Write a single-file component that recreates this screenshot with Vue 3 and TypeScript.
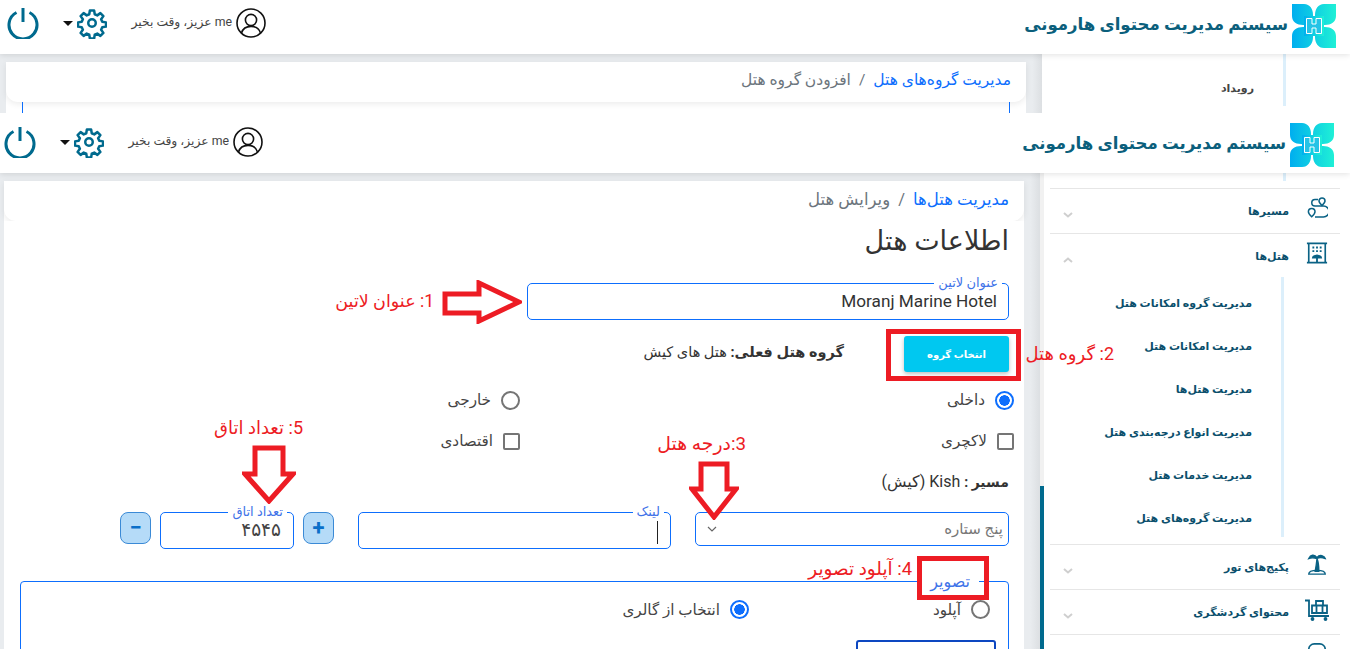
<template>
  <div class="page">
    <!-- upper shot, cut off by the lower one -->
    <section class="shot shot-a">
      <header class="top">
        <svg class="logo" viewBox="0 0 44 44">
          <defs>
            <linearGradient id="lg" x1="0" y1="0" x2="1" y2="0">
              <stop offset="0" stop-color="#00aeef" />
              <stop offset="1" stop-color="#1ff0d6" />
            </linearGradient>
          </defs>
          <path fill="url(#lg)" d="M0 0H12C18 0 21 5 21 11V14H14V21H11C5 21 0 18 0 12ZM44 0H32C26 0 23 5 23 11V14H30V21H33C39 21 44 18 44 12ZM0 44H12C18 44 21 39 21 33V30H14V23H11C5 23 0 26 0 32ZM44 44H32C26 44 23 39 23 33V30H30V23H33C39 23 44 26 44 32Z" />
          <rect x="12" y="12" width="20" height="20" fill="url(#lg)" />
          <path fill="#25c3e6" stroke="#fff" d="M14.500 14.500H20V20H24V14.500H29.500V29.500H24V24H20V29.500H14.500Z" />
        </svg>
        <h1 class="brand">سیستم مدیریت محتوای هارمونی</h1>
        <div class="tools">
          <svg class="avatar" viewBox="0 0 30 30" fill="none" stroke="#111" stroke-width="1.6">
            <circle cx="15" cy="15" r="14" />
            <circle cx="15" cy="12" r="5.6" />
            <path d="M5.5 25C7 20 11 18.4 15 18.4S23 20 24.5 25" />
          </svg>
          <span class="hello">me عزیز، وقت بخیر</span>
          <svg class="gear" viewBox="0 0 24 24" fill="none" stroke="#006a8e" stroke-width="2" stroke-linejoin="round">
            <circle cx="12" cy="12" r="3" />
            <path d="M10.3 2h3.4l.5 3 2 .9 2.500-1.800 2.400 2.400-1.800 2.500.9 2 3 .5v3.400l-3 .5-.9 2 1.800 2.500-2.400 2.400-2.500-1.800-2 .9-.5 3h-3.400l-.5-3-2-.9-2.500 1.800-2.400-2.400 1.800-2.500-.9-2-3-.5v-3.400l3-.5.9-2-1.800-2.500 2.400-2.400 2.500 1.800 2-.9z" />
          </svg>
          <span class="caret"></span>
          <svg class="power" viewBox="0 0 32 32" fill="none" stroke="#006a8e" stroke-width="3">
            <path d="M9.500 5.500A14 14 0 1 0 22.500 5.500" />
            <path d="M16 1V15" />
          </svg>
        </div>
      </header>
      <div class="body">
        <aside class="side side-a">
          <div class="track"></div>
          <div class="side-a-in">
            <div class="sub-a"><span>رویداد</span></div>
          </div>
        </aside>
        <div class="gutter"></div>
        <main class="main">
          <nav class="crumb">
            <a>مدیریت گروه‌های هتل</a><i>/</i><span>افزودن گروه هتل</span>
          </nav>
          <div class="cut-box"></div>
        </main>
      </div>
    </section>

    <!-- lower shot -->
    <section class="shot shot-b">
      <header class="top">
        <svg class="logo" viewBox="0 0 44 44">
          <path fill="url(#lg)" d="M0 0H12C18 0 21 5 21 11V14H14V21H11C5 21 0 18 0 12ZM44 0H32C26 0 23 5 23 11V14H30V21H33C39 21 44 18 44 12ZM0 44H12C18 44 21 39 21 33V30H14V23H11C5 23 0 26 0 32ZM44 44H32C26 44 23 39 23 33V30H30V23H33C39 23 44 26 44 32Z" />
          <rect x="12" y="12" width="20" height="20" fill="url(#lg)" />
          <path fill="#25c3e6" stroke="#fff" d="M14.500 14.500H20V20H24V14.500H29.500V29.500H24V24H20V29.500H14.500Z" />
        </svg>
        <h1 class="brand">سیستم مدیریت محتوای هارمونی</h1>
        <div class="tools">
          <svg class="avatar" viewBox="0 0 30 30" fill="none" stroke="#111" stroke-width="1.6">
            <circle cx="15" cy="15" r="14" />
            <circle cx="15" cy="12" r="5.6" />
            <path d="M5.5 25C7 20 11 18.4 15 18.4S23 20 24.5 25" />
          </svg>
          <span class="hello">me عزیز، وقت بخیر</span>
          <svg class="gear" viewBox="0 0 24 24" fill="none" stroke="#006a8e" stroke-width="2" stroke-linejoin="round">
            <circle cx="12" cy="12" r="3" />
            <path d="M10.3 2h3.4l.5 3 2 .9 2.500-1.800 2.400 2.400-1.800 2.500.9 2 3 .5v3.400l-3 .5-.9 2 1.800 2.500-2.400 2.400-2.500-1.800-2 .9-.5 3h-3.400l-.5-3-2-.9-2.500 1.800-2.400-2.400 1.800-2.500-.9-2-3-.5v-3.400l3-.5.9-2-1.800-2.500 2.400-2.400 2.500 1.800 2-.9z" />
          </svg>
          <span class="caret"></span>
          <svg class="power" viewBox="0 0 32 32" fill="none" stroke="#006a8e" stroke-width="3">
            <path d="M9.500 5.500A14 14 0 1 0 22.500 5.500" />
            <path d="M16 1V15" />
          </svg>
        </div>
      </header>

      <div class="body">
        <aside class="side">
          <div class="track"><div class="thumb"></div></div>
          <div class="menu">
            <div class="stub"></div>
            <div class="item">
              <svg class="ico" viewBox="0 0 22 22" fill="none" stroke="#0a6285" stroke-width="1.500">
                <path d="M16 1a3 3 0 0 1 3 3c0 1.500-3 4.500-3 4.500s-3-3-3-4.500a3 3 0 0 1 3-3z" />
                <path d="M12 2.500H9a3.250 3.250 0 0 0 0 6.500H17.500a5.500 5.500 0 0 1 0 11H9" />
                <path d="M5.700 11.500a3.300 3.300 0 0 1 3.300 3.300c0 2-3.300 5-3.300 5s-3.300-3-3.300-5a3.300 3.300 0 0 1 3.300-3.300z" />
              </svg>
              <span>مسیرها</span>
              <svg class="chev" viewBox="0 0 10 6"><path d="M1 1l4 3.500L9 1" /></svg>
            </div>
            <div class="item open">
              <svg class="ico" viewBox="0 0 24 24" fill="none" stroke="#0a6285" stroke-width="1.800">
                <path d="M1 1.500H23M1 22.500H23M3 1.500V22.500M21 1.500V22.500" />
                <path d="M7 6h2M11 6h2M15 6h2M7 10h2M11 10h2M15 10h2M12 14V22" stroke-width="2" />
                <path d="M7.500 17C8 14 16 14 16.500 17Z" fill="#0a6285" />
              </svg>
              <span>هتل‌ها</span>
              <svg class="chev" viewBox="0 0 10 6"><path d="M1 5l4-3.500L9 5" /></svg>
            </div>
            <ul class="subs">
              <li v-for="s in subs" :key="s">{{ s }}</li>
            </ul>
            <div class="item sep">
              <svg class="ico" viewBox="0 0 24 24" fill="#0a6285" stroke="#0a6285" stroke-width="1.500">
                <path d="M12 5C9 1 5 2 3 6c3-1 5-1 9 0 3-1.500 6-1 9 0-1-3-6-5-9-1zM12 6c-.5 5-1 9-2 14h4c0-5 0-9-2-14z" />
                <path d="M3 23c0-3 4-4 9-4s9 1 9 4z" fill="none" />
              </svg>
              <span>پکیج‌های تور</span>
              <svg class="chev" viewBox="0 0 10 6"><path d="M1 1l4 3.500L9 1" /></svg>
            </div>
            <div class="item">
              <svg class="ico wide" viewBox="0 0 26 22" fill="none" stroke="#0a6285" stroke-width="1.800">
                <path d="M1 1.500H5V17H25" />
                <path d="M8 6.500H23V14H8ZM12.500 14V6.500M18.500 14V6.500M12 6.500V2H19V6.500" />
                <circle cx="8.500" cy="20" r="1" fill="#0a6285" />
                <circle cx="21.500" cy="20" r="1" fill="#0a6285" />
              </svg>
              <span>محتوای گردشگری</span>
              <svg class="chev" viewBox="0 0 10 6"><path d="M1 1l4 3.500L9 1" /></svg>
            </div>
            <div class="item">
              <svg class="ico" viewBox="0 0 24 24" fill="none" stroke="#0a6285" stroke-width="1.800">
                <rect x="3" y="1" width="18" height="22" rx="6" />
              </svg>
            </div>
          </div>
        </aside>
        <div class="gutter"></div>

        <main class="main">
          <nav class="crumb">
            <a>مدیریت هتل‌ها</a><i>/</i><span>ویرایش هتل</span>
          </nav>
          <form class="form" @submit.prevent>
            <h2>اطلاعات هتل</h2>
            <div class="field latin">
              <label>عنوان لاتین</label>
              <div class="val en">Moranj Marine Hotel</div>
            </div>
            <div class="group">
              <button class="pick" type="button">انتخاب گروه</button>
              <p><b>گروه هتل فعلی:</b> هتل های کیش</p>
            </div>
            <div class="opts first">
              <div class="opt"><span class="radio on"></span>داخلی</div>
              <div class="opt"><span class="radio"></span>خارجی</div>
            </div>
            <div class="opts">
              <div class="opt"><span class="check"></span>لاکچری</div>
              <div class="opt"><span class="check"></span>اقتصادی</div>
            </div>
            <p class="route"><b>مسیر :</b> Kish (کیش)</p>
            <div class="row">
              <div class="field select">
                <span class="ph">پنج ستاره</span>
                <svg viewBox="0 0 10 6" class="sel-chev"><path d="M1 1l4 4 4-4" /></svg>
              </div>
              <div class="field link">
                <label>لینک</label>
                <span class="cursor"></span>
              </div>
              <button class="step" type="button">+</button>
              <div class="field count">
                <label>تعداد اتاق</label>
                <div class="val">۴۵۴۵</div>
              </div>
              <button class="step" type="button">−</button>
            </div>
            <div class="image-box">
              <label>تصویر</label>
              <div class="img-opts">
                <div class="opt"><span class="radio"></span>آپلود</div>
                <div class="opt"><span class="radio on"></span>انتخاب از گالری</div>
              </div>
              <div class="gallery"></div>
            </div>
          </form>
        </main>
      </div>
    </section>

    <!-- hand-drawn notes on top of the shots -->
    <div class="note-box box-2"></div>
    <div class="note-box box-4"></div>
    <svg class="arrow ar-1" viewBox="0 0 80 44"><path d="M3 14H37V3L77 22L37 41V33H3Z" /></svg>
    <svg class="arrow ar-5" viewBox="0 0 54 59"><path d="M13 3H41V29H51L27 56L3 29H13Z" /></svg>
    <svg class="arrow ar-3" viewBox="0 0 50 59"><path d="M12 3H38V28H47L25 56L3 28H12Z" /></svg>
    <span class="note n1">1: عنوان لاتین</span>
    <span class="note n2">2: گروه هتل</span>
    <span class="note n3">3:درجه هتل</span>
    <span class="note n4">4: آپلود تصویر</span>
    <span class="note n5">5: تعداد اتاق</span>
  </div>
</template>

<script setup lang="ts">
const subs: string[] = [
  'مدیریت گروه امکانات هتل',
  'مدیریت امکانات هتل',
  'مدیریت هتل‌ها',
  'مدیریت انواع درجه‌بندی هتل',
  'مدیریت خدمات هتل',
  'مدیریت گروه‌های هتل'
]
</script>

<style>
html, body { margin: 0; overflow: hidden; background: #fff; }
</style>

<style scoped>
.page {
  position: relative;
  width: 1350px;
  height: 649px;
  overflow: hidden;
  font-family: Roboto, "DejaVu Sans", sans-serif;
  color: #333;
  direction: rtl;
}
.shot { overflow: hidden; background: #e9ecef; }
.shot-a { height: 113px; }
.shot-b { height: 536px; }

.top {
  position: relative;
  z-index: 2;
  display: flex;
  align-items: flex-end;
  height: 54px;
  padding: 0 14px 6px 7px;
  box-sizing: border-box;
  background: #fff;
  box-shadow: 0 1px 6px rgba(0, 0, 0, .12);
}
.shot-b .top { height: 60px; padding-right: 16px; padding-left: 4px; }
.logo { width: 44px; height: 44px; flex: none; }
.brand {
  margin: 0 4px 10px 0;
  font-size: 16.600px;
  font-weight: 700;
  line-height: 26px;
  color: #0b5f7c;
  white-space: nowrap;
}
.tools {
  display: flex;
  align-items: center;
  margin-right: auto;
  margin-bottom: 9px;
  height: 32px;
}
.avatar { width: 30px; height: 30px; order: 1; }
.hello {
  order: 2;
  margin: 0 4px 2px 0;
  width: 101px;
  font-size: 12.300px;
  color: #444;
  white-space: nowrap;
}
.gear { order: 3; width: 30px; height: 32px; margin-right: 24px; }
.caret {
  order: 4;
  width: 0;
  height: 0;
  margin-right: 4px;
  border: 5px solid transparent;
  border-top-color: #111;
  border-bottom: 0;
}
.power { order: 5; width: 32px; height: 32px; margin-right: 24px; }

.body { display: flex; align-items: stretch; height: 100%; }

.side { display: flex; flex: none; width: 310px; background: #fff; }
.side-a { width: 308px; }
.track { order: 2; width: 4px; flex: none; background: #f1f1f1; }
.thumb { margin-top: 313px; height: 223px; background: #006a8e; }
.side-a .track { background: #fff; }
.side-a-in { flex: 1; padding-right: 64px; }
.sub-a {
  height: 52px;
  padding: 0 29px 0 0;
  border-right: 3px solid #dceffb;
  font-size: 11px;
  font-weight: 700;
  color: #444;
}
.sub-a span { display: block; padding-top: 28px; }

.menu { flex: 1; padding: 0 10px 0 6px; box-sizing: border-box; min-width: 0; }
.stub {
  height: 16px;
  box-sizing: border-box;
  border-bottom: 1px solid #e6e6e6;
  background: linear-gradient(#dceffb, #dceffb) no-repeat 233px 0 / 3px 8px;
}
.item {
  display: flex;
  align-items: center;
  height: 44px;
  border-bottom: 1px solid #e6e6e6;
  font-size: 11px;
  font-weight: 700;
  color: #0b4f6c;
}
.item.open { border-bottom: 0; }
.item.sep { border-top: 1px solid #e6e6e6; }
.ico { width: 22px; height: 22px; margin: -6px 12px 0 17px; flex: none; }
.ico.wide { width: 26px; margin: -4px 10px 0 15px; }
.item span { white-space: nowrap; }
.chev {
  width: 10px;
  height: 6px;
  margin: 7px auto 0 13px;
  fill: none;
  stroke: #cfcfcf;
  stroke-width: 2;
}
.subs {
  list-style: none;
  box-sizing: border-box;
  height: 260px;
  margin: -1px 56px 7px 0;
  padding: 5px 29px 0 0;
  border-right: 3px solid #dceffb;
  font-size: 11px;
  font-weight: 700;
  color: #0b4f6c;
}
.subs li {
  height: 43px;
  line-height: 43px;
  white-space: nowrap;
}

.gutter {
  width: 16px;
  flex: none;
  background: linear-gradient(to left, #dcdfe2, #e9ecef 60%);
}

.main { flex: 1; min-width: 0; padding: 8px 0 0; margin-left: 6px; background: linear-gradient(#e9ecef 8px, #fff 8px); }
.shot-b .main { margin-left: 4px; }
.crumb {
  display: flex;
  align-items: center;
  height: 40px;
  padding: 0 15px 4px 0;
  box-sizing: border-box;
  background: #fff;
  border-radius: 0 0 12px 12px;
  box-shadow: 0 2px 6px rgba(0, 0, 0, .08);
  font-size: 15.500px;
  color: #6c757d;
}
.shot-b .crumb { font-size: 16.500px; }
.crumb a { color: #0d6efd; }
.crumb i { margin: 0 8px; font-style: normal; }
.cut-box {
  height: 20px;
  margin: 0 16px;
  border: 1px solid #0d6efd;
  border-width: 0 1px;
}

.form { padding: 0 15px 0 16px; background: #fff; height: 400px; }
h2 {
  margin: 0;
  padding-top: 5px;
  height: 62px;
  box-sizing: border-box;
  font-size: 27px;
  line-height: 30px;
  font-weight: 400;
  color: #333;
}
.field {
  position: relative;
  box-sizing: border-box;
  border: 1px solid #0d6efd;
  border-radius: 5px;
}
.field > label, .image-box > label {
  position: absolute;
  top: -8px;
  right: 6px;
  padding: 0 4px;
  background: #fff;
  font-size: 13px;
  line-height: 14px;
  color: #3f73e8;
}
.latin { width: 482px; height: 37px; }
.val { padding: 7px 11px 0 0; font-size: 17.200px; line-height: 20px; color: #333; }
.group {
  display: flex;
  align-items: center;
  margin-top: 16px;
  height: 36px;
}
.pick {
  width: 105px;
  height: 36px;
  margin-left: 60px;
  border: 0;
  border-radius: 3px;
  background: #00c8f0;
  color: #fff;
  font: 700 10px Roboto, "DejaVu Sans", sans-serif;
  box-shadow: 0 2px 4px rgba(0, 0, 0, .25);
}
.group p { margin: 0 0 3px; font-size: 14.500px; }
.opts {
  display: grid;
  grid-template-columns: 494px 1fr;
  margin-right: -5px;
  margin-top: 21px;
  height: 20px;
}
.opts.first { margin-top: 18px; }
.opt { display: flex; align-items: center; gap: 10px; font-size: 15.200px; color: #444; }
.radio {
  width: 19px;
  height: 19px;
  flex: none;
  box-sizing: border-box;
  border: 2px solid #757575;
  border-radius: 50%;
}
.radio.on {
  border-color: #0d6efd;
  background: radial-gradient(circle, #0d6efd 0 5px, #fff 5.500px);
}
.check {
  width: 17px;
  height: 17px;
  flex: none;
  box-sizing: border-box;
  border: 2px solid #757575;
  border-radius: 2px;
}
.route { margin: 21px 0 0; height: 22px; font-size: 16px; line-height: 20px; }
.route b { font-size: 14px; }
.row { display: flex; align-items: flex-start; margin-top: 18px; }
.select { display: flex; align-items: center; justify-content: space-between; width: 314px; height: 34px; padding: 0 5px 0 11px; }
.ph { font-size: 15px; color: #777; }
.sel-chev { width: 10px; height: 6px; fill: none; stroke: #666; stroke-width: 1.200; }
.link { width: 313px; height: 37px; margin-right: 24px; }
.cursor { position: absolute; top: 8px; right: 12px; width: 1px; height: 23px; background: #222; }
.step {
  width: 31px;
  height: 32px;
  margin-right: 24px;
  padding: 0;
  border: 1px solid #3b8ad6;
  border-radius: 8px;
  background: #b5dbf8;
  color: #0a6fc9;
  font: 700 22px/28px Roboto, sans-serif;
}
.count { width: 134px; height: 37px; margin-right: 9px; }
.count .val { padding: 7px 12px 0 0; font-size: 18.500px; color: #444; }
.count + .step { margin-right: 9px; }

.image-box {
  position: relative;
  margin-top: 32px;
  height: 120px;
  border: 1px solid #0d6efd;
  border-radius: 4px;
}
.image-box > label {
  top: -10px;
  right: 29px;
  padding: 0 9px 0 8px;
  font-size: 16px;
  line-height: 20px;
}
.img-opts {
  display: grid;
  grid-template-columns: 241px 1fr;
  padding: 18px 18px 0 0;
}
.gallery {
  width: 136px;
  height: 60px;
  margin: 21px 12px 0 0;
  border: 2px solid #0d47c1;
  border-radius: 3px;
}

.note-box { position: absolute; box-sizing: border-box; border: 5px solid #ed1c24; }
.box-2 { left: 886px; top: 329px; width: 135px; height: 52px; }
.box-4 { left: 917px; top: 556px; width: 72px; height: 44px; }
.arrow { position: absolute; fill: #fff; stroke: #ed1c24; stroke-width: 5; }
.ar-1 { left: 442px; top: 280px; width: 80px; height: 44px; }
.ar-5 { left: 242px; top: 445px; width: 54px; height: 59px; }
.ar-3 { left: 689px; top: 461px; width: 50px; height: 59px; }
.note {
  position: absolute;
  font-size: 18px;
  line-height: 20px;
  color: #ed1c24;
  white-space: nowrap;
}
.n1 { right: 916px; top: 291px; font-size: 17.500px; }
.n2 { right: 236px; top: 344px; }
.n3 { right: 604px; top: 434px; font-size: 18.800px; }
.n4 { right: 438px; top: 559px; font-size: 18.400px; }
.n5 { right: 1047px; top: 418px; }
</style>
